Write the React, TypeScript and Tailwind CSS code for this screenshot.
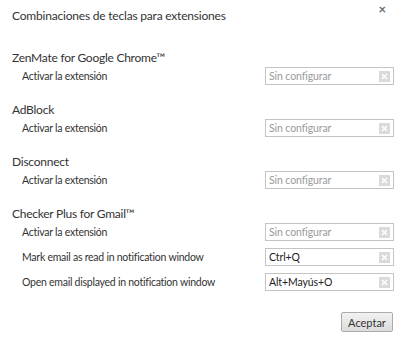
import React from "react";

type Row = { label: string; value?: string };
type Ext = { name: string; rows: Row[] };

const exts: Ext[] = [
  { name: "ZenMate for Google Chrome™", rows: [{ label: "Activar la extensión" }] },
  { name: "AdBlock", rows: [{ label: "Activar la extensión" }] },
  { name: "Disconnect", rows: [{ label: "Activar la extensión" }] },
  {
    name: "Checker Plus for Gmail™",
    rows: [
      { label: "Activar la extensión" },
      { label: "Mark email as read in notification window", value: "Ctrl+Q" },
      { label: "Open email displayed in notification window", value: "Alt+Mayús+O" },
    ],
  },
];

function ClearIcon() {
  return (
    <svg width="11" height="11" viewBox="0 0 11 11" className="shrink-0">
      <rect x="0" y="0" width="11" height="11" fill="#dadada" />
      <path d="M3 3 L8 8 M8 3 L3 8" stroke="#fff" strokeWidth="1.6" />
    </svg>
  );
}

function Shortcut({ value }: { value?: string }) {
  return (
    <div className="w-[129px] h-[18px] border border-[#c4c4c4] bg-white flex items-center pl-[3px] pr-[3px] justify-between shrink-0">
      <span className={"text-[10.5px] leading-none tracking-[-0.1px] " + (value ? "text-[#222]" : "text-[#9a9a9a]")}>
        {value ?? "Sin configurar"}
      </span>
      <ClearIcon />
    </div>
  );
}

export default function App() {
  return (
    <div
      className="w-[400px] h-[337px] bg-white relative text-[#333]"
      style={{ fontFamily: "Lato, 'Open Sans', sans-serif" }}
    >
      <div className="absolute right-[14px] top-[3px] text-[#6b6b6b] text-[13px] font-bold leading-none">×</div>
      <div className="pl-[12px] pt-[7px] h-[49px] text-[12px] tracking-[-0.2px] leading-[18px] text-[#333]">
        Combinaciones de teclas para extensiones
      </div>
      <div className="flex flex-col gap-[16px]">
        {exts.map((e) => (
          <div key={e.name} className="flex flex-col">
            <div className="pl-[12px] h-[18px] text-[12px] tracking-[-0.25px] leading-[18px] text-[#333]">{e.name}</div>
            <div className="flex flex-col gap-[7px]">
              {e.rows.map((r) => (
                <div key={r.label} className="flex items-center justify-between pl-[22px] pr-[6px] h-[18px]">
                  <span className="text-[10.5px] tracking-[-0.25px] leading-[18px] text-[#333] whitespace-nowrap">{r.label}</span>
                  <Shortcut value={r.value} />
                </div>
              ))}
            </div>
          </div>
        ))}
      </div>
      <div className="flex justify-end pr-[7px] pt-[21px]">
        <button className="w-[52px] h-[20px] border border-[#acacac] rounded-[2px] bg-gradient-to-b from-[#f2f2f2] to-[#dcdcdc] text-[11px] text-[#333] leading-none">
          Aceptar
        </button>
      </div>
    </div>
  );
}
